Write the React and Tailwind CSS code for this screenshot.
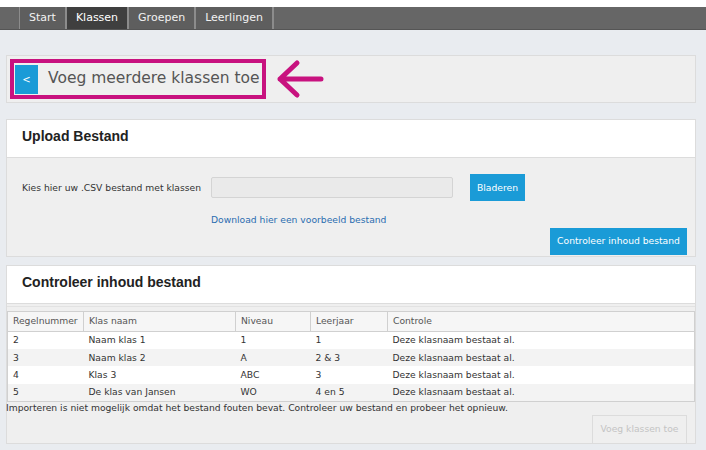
import React from "react";

const rows = [
  { nr: "2", naam: "Naam klas 1", niveau: "1", jaar: "1", controle: "Deze klasnaam bestaat al." },
  { nr: "3", naam: "Naam klas 2", niveau: "A", jaar: "2 & 3", controle: "Deze klasnaam bestaat al." },
  { nr: "4", naam: "Klas 3", niveau: "ABC", jaar: "3", controle: "Deze klasnaam bestaat al." },
  { nr: "5", naam: "De klas van Jansen", niveau: "WO", jaar: "4 en 5", controle: "Deze klasnaam bestaat al." },
];

const tabs = ["Start", "Klassen", "Groepen", "Leerlingen"];

export default function App() {
  return (
    <div className="w-[706px] h-[450px] overflow-hidden bg-[#e9ecf0] font-['DejaVu_Sans',sans-serif] text-[#333]">
      {/* Top nav */}
      <div className="h-[7px] bg-white" />
      <div className="flex h-[23px] bg-[#666] border-b border-[#555]">
        <div className="w-[20px] border-r border-[#8c8c8c]" />
        {tabs.map((t) => (
          <div
            key={t}
            className={`flex items-center px-[9px] border-r-2 border-[#8c8c8c] text-[11px] ${
              t === "Klassen" ? "bg-[#3f3f3f] text-white" : "bg-[#5e5e5e] text-[#f2f2f2]"
            }`}
          >
            {t}
          </div>
        ))}
      </div>

      <div className="pl-[6px] pr-[10px]">
        {/* Page title */}
        <div className="mt-[25px] h-[48px] flex items-center px-[3px] bg-[#efefef] border border-[#dcdcdc]">
          <div className="flex items-center w-[256px] h-[40px] border-[4px] border-[#c8127f] pl-[1px]">
            <button className="w-[23px] h-[29px] bg-[#1a9bd7] text-white text-[10px] flex items-center justify-center">
              &lt;
            </button>
            <span className="ml-[10px] text-[15.5px] text-[#555]">Voeg meerdere klassen toe</span>
          </div>
          <svg width="50" height="40" viewBox="0 0 50 40" className="ml-[9px]">
            <path
              d="M22 4 L5 20 L22 36 M5 20 L46 20"
              fill="none"
              stroke="#c8127f"
              strokeWidth="5"
              strokeLinecap="round"
              strokeLinejoin="round"
            />
          </svg>
        </div>

        {/* Upload panel */}
        <div className="mt-[16px] border border-[#dcdcdc] bg-[#efefef]">
          <div className="h-[38px] bg-white border-b border-[#dcdcdc] flex items-center px-[15px]">
            <h2 className="font-['Liberation_Sans',Arial,sans-serif] font-bold text-[14px] text-[#222] -mt-[4px]">Upload Bestand</h2>
          </div>
          <div className="pl-[15px] pr-[8px] pt-[16px] pb-[1px]">
            <div className="flex items-center">
              <label className="w-[189px] text-[9.2px] text-[#333]">Kies hier uw .CSV bestand met klassen</label>
              <input className="w-[242px] h-[21px] bg-[#eaeaea] border border-[#d4d4d4] rounded-[2px]" />
              <button className="ml-[17px] w-[55px] h-[27px] bg-[#1a9bd7] text-white text-[9.2px]">Bladeren</button>
            </div>
            <div className="ml-[189px] mt-[12px] text-[9.2px] text-[#2a6db0]">Download hier een voorbeeld bestand</div>
            <div className="flex justify-end mt-[1px]">
              <button className="w-[137px] h-[27px] bg-[#1a9bd7] text-white text-[9.2px]">Controleer inhoud bestand</button>
            </div>
          </div>
        </div>

        {/* Controle panel */}
        <div className="mt-[8px] border border-[#dcdcdc] bg-[#efefef] h-[179px]">
          <div className="h-[38px] bg-white border-b border-[#dcdcdc] flex items-center px-[15px]">
            <h2 className="font-['Liberation_Sans',Arial,sans-serif] font-bold text-[14px] text-[#222] -mt-[3px]">Controleer inhoud bestand</h2>
          </div>
          <div className="h-[3px] border-b border-[#e2e2e2]" />
          <table className="mt-[4px] w-full border-collapse border border-[#d0d0d0] text-[9.2px] table-fixed">
            <colgroup>
              <col className="w-[76px]" />
              <col className="w-[152px]" />
              <col className="w-[75px]" />
              <col className="w-[77px]" />
              <col />
            </colgroup>
            <thead>
              <tr className="h-[20px] bg-[#f6f6f6] text-[#555] border-b border-[#d0d0d0]">
                {["Regelnummer", "Klas naam", "Niveau", "Leerjaar", "Controle"].map((h) => (
                  <th key={h} className="text-left font-normal px-[5px] border-r border-[#d0d0d0]">
                    {h}
                  </th>
                ))}
              </tr>
            </thead>
            <tbody>
              {rows.map((r, i) => (
                <tr key={r.nr} className={`h-[17.5px] ${i % 2 === 0 ? "bg-white" : "bg-[#f3f3f3]"}`}>
                  <td className="px-[5px]">{r.nr}</td>
                  <td className="px-[5px]">{r.naam}</td>
                  <td className="px-[5px]">{r.niveau}</td>
                  <td className="px-[5px]">{r.jaar}</td>
                  <td className="px-[5px]">{r.controle}</td>
                </tr>
              ))}
            </tbody>
          </table>
          <p className="text-[9.2px] text-[#333] -ml-[1px] leading-[12px]">
            Importeren is niet mogelijk omdat het bestand fouten bevat. Controleer uw bestand en probeer het opnieuw.
          </p>
          <div className="flex justify-end pr-[8px] mt-[1px]">
            <button className="w-[95px] h-[29px] bg-[#efefef] border border-[#dcdcdc] text-[#c4c4c4] text-[9.2px]">
              Voeg klassen toe
            </button>
          </div>
        </div>
      </div>
    </div>
  );
}
